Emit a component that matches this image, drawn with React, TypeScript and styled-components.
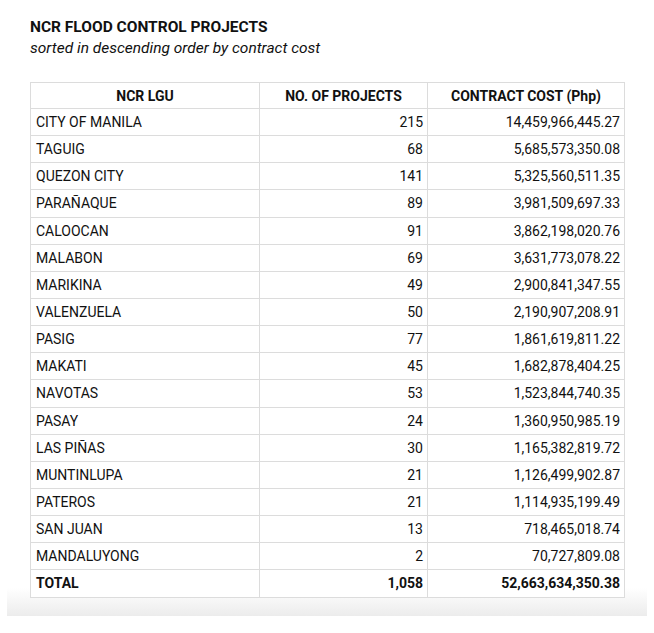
import React from "react";
import styled, { createGlobalStyle } from "styled-components";

const Global = createGlobalStyle`
  html, body { margin: 0; padding: 0; background: #ffffff; }
  body { font-family: Roboto, "Liberation Sans", Arial, sans-serif; color: #111; }
`;

const Card = styled.div`
  margin: 0 7px;
  padding: 17px 24px 18px 23px;
  background: linear-gradient(to bottom, #ffffff 0, #ffffff calc(100% - 28px), #ececec 100%);
`;

const Title = styled.h1`
  margin: 0;
  font-size: 15.5px;
  font-weight: 700;
  line-height: 21px;
  color: #111;
`;

const Subtitle = styled.p`
  margin: 0 0 23px;
  font-size: 15.5px;
  font-style: italic;
  line-height: 21px;
  color: #111;
`;

const Table = styled.table`
  width: 594px;
  border-collapse: collapse;
  table-layout: fixed;
  font-size: 14px;
  background: #fff;
`;

const HeadCell = styled.th`
  border: 1px solid #dcdcdc;
  height: 25px;
  padding: 0 4px;
  font-weight: 700;
  font-size: 14px;
  text-align: center;
  color: #111;
`;

const Cell = styled.td<{ $align?: "left" | "right"; $bold?: boolean }>`
  border: 1px solid #dcdcdc;
  height: 26.15px;
  padding: 0 4px 0 5px;
  text-align: ${(p) => p.$align ?? "left"};
  font-weight: ${(p) => (p.$bold ? 700 : 400)};
  color: #111;
  white-space: nowrap;
`;

const rows: [string, string, string][] = [
  ["CITY OF MANILA", "215", "14,459,966,445.27"],
  ["TAGUIG", "68", "5,685,573,350.08"],
  ["QUEZON CITY", "141", "5,325,560,511.35"],
  ["PARAÑAQUE", "89", "3,981,509,697.33"],
  ["CALOOCAN", "91", "3,862,198,020.76"],
  ["MALABON", "69", "3,631,773,078.22"],
  ["MARIKINA", "49", "2,900,841,347.55"],
  ["VALENZUELA", "50", "2,190,907,208.91"],
  ["PASIG", "77", "1,861,619,811.22"],
  ["MAKATI", "45", "1,682,878,404.25"],
  ["NAVOTAS", "53", "1,523,844,740.35"],
  ["PASAY", "24", "1,360,950,985.19"],
  ["LAS PIÑAS", "30", "1,165,382,819.72"],
  ["MUNTINLUPA", "21", "1,126,499,902.87"],
  ["PATEROS", "21", "1,114,935,199.49"],
  ["SAN JUAN", "13", "718,465,018.74"],
  ["MANDALUYONG", "2", "70,727,809.08"],
];

export default function App() {
  return (
    <>
      <Global />
      <Card>
        <Title>NCR FLOOD CONTROL PROJECTS</Title>
        <Subtitle>sorted in descending order by contract cost</Subtitle>
        <Table>
          <colgroup>
            <col style={{ width: 229 }} />
            <col style={{ width: 168 }} />
            <col style={{ width: 197 }} />
          </colgroup>
          <thead>
            <tr>
              <HeadCell>NCR LGU</HeadCell>
              <HeadCell>NO. OF PROJECTS</HeadCell>
              <HeadCell>CONTRACT COST (Php)</HeadCell>
            </tr>
          </thead>
          <tbody>
            {rows.map(([lgu, n, cost]) => (
              <tr key={lgu}>
                <Cell>{lgu}</Cell>
                <Cell $align="right">{n}</Cell>
                <Cell $align="right">{cost}</Cell>
              </tr>
            ))}
            <tr>
              <Cell $bold>TOTAL</Cell>
              <Cell $align="right" $bold>1,058</Cell>
              <Cell $align="right" $bold>52,663,634,350.38</Cell>
            </tr>
          </tbody>
        </Table>
      </Card>
    </>
  );
}
